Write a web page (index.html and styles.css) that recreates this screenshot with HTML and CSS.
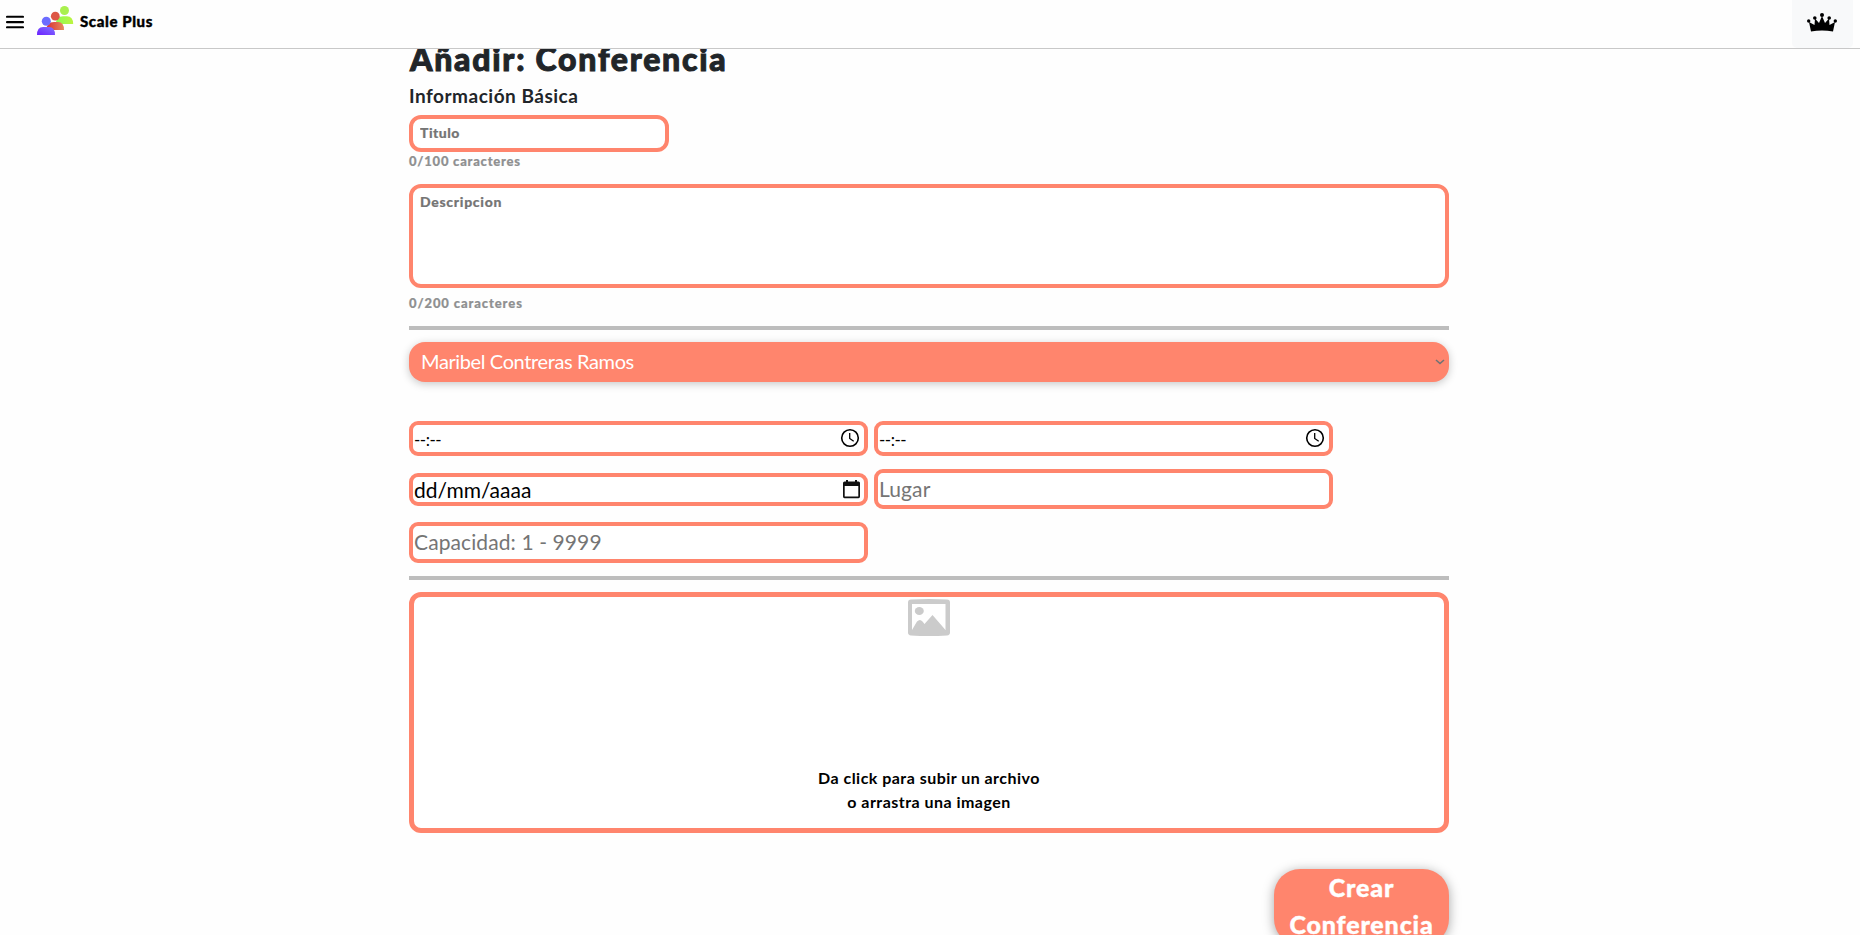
FILE: index.html
```html
<!DOCTYPE html>
<html lang="es">
<head>
<meta charset="utf-8">
<title>Scale Plus</title>
<link rel="stylesheet" href="styles.css">
</head>
<body>
<header class="topbar">
  <svg class="menu" width="18" height="14" viewBox="0 0 18 14"><path d="M1 1.8h16M1 7.1h16M1 12.3h16" stroke="#000" stroke-width="2.1" stroke-linecap="round"/></svg>
  <svg class="logo" width="37" height="30" viewBox="0 0 37 30">
    <defs>
      <linearGradient id="g1" x1="0" x2="1"><stop offset="0" stop-color="#8dfb55"/><stop offset="1" stop-color="#bdf43f"/></linearGradient>
      <linearGradient id="g2" x1="0" x2="1"><stop offset="0" stop-color="#d92f36"/><stop offset="1" stop-color="#e68a5c"/></linearGradient>
      <linearGradient id="g3" x1="0" x2="1" y1="1" y2="0"><stop offset="0" stop-color="#6a20ff"/><stop offset="1" stop-color="#8274ff"/></linearGradient>
    </defs>
    <circle cx="27.5" cy="4.5" r="4.5" fill="#a9f04e"/><path d="M19 18q0-7.800 7-7.800h4q6 0 6.200 7.800z" fill="url(#g1)"/>
    <circle cx="18.300" cy="10.200" r="4.400" fill="#dd5746"/><path d="M9.500 24q0-8 7.500-8h4q6 0 6 8z" fill="url(#g2)"/>
    <circle cx="9.300" cy="15.200" r="4.500" fill="#6c6cff"/><path d="M0 29q0-8 6-8h6q6 0 6 8z" fill="url(#g3)"/>
  </svg>
  <span class="brand">Scale Plus</span>
  <div class="crown">
    <svg width="30" height="19" viewBox="0 0 30 19"><path d="M4 18.500 2 9 7.500 12 8 5.500l4 4.500L15 3l3 7 4-4.500.5 6.500L28 9l-2 9.500q-11-2-22 0z"/><circle cx="1.700" cy="8" r="1.700"/><circle cx="7.800" cy="5" r="1.800"/><circle cx="15" cy="2" r="2"/><circle cx="22.200" cy="5" r="1.800"/><circle cx="28.300" cy="8" r="1.700"/></svg>
  </div>
</header>
<main class="form">
  <h1 class="title">Añadir: Conferencia</h1>
  <h2 class="subtitle">Información Básica</h2>
  <input class="field name" placeholder="Titulo">
  <div class="count count-name">0/100 caracteres</div>
  <textarea class="field description" placeholder="Descripcion"></textarea>
  <div class="count count-desc">0/200 caracteres</div>
  <hr class="rule">
  <div class="select"><span class="person">Maribel Contreras Ramos</span>
    <svg width="10" height="6" viewBox="0 0 10 6"><path d="M1 1l4 3.500L9 1" fill="none" stroke="#6f7274" stroke-width="1.600"/></svg>
  </div>
  <div class="grid">
    <div class="box time"><span class="dashes">--:--</span><svg width="20" height="20" viewBox="0 0 20 20"><circle cx="10" cy="10" r="8.300" fill="none" stroke="#000" stroke-width="1.600"/><path d="M9.700 5v5.500l4 2.800" fill="none" stroke="#000" stroke-width="1.300"/></svg></div>
    <div class="box time"><span class="dashes">--:--</span><svg width="20" height="20" viewBox="0 0 20 20"><circle cx="10" cy="10" r="8.300" fill="none" stroke="#000" stroke-width="1.600"/><path d="M9.700 5v5.500l4 2.800" fill="none" stroke="#000" stroke-width="1.300"/></svg></div>
    <div class="box date"><span class="datetext">dd/mm/aaaa</span><svg width="17" height="19" viewBox="0 0 17 19"><path d="M3 0h2v1.500h7V0h2v1.500h1.500Q17 1.500 17 3v13.500q0 1.700-1.500 1.700h-14Q0 18.200 0 16.500V3q0-1.500 1.500-1.500H3zM1.700 6v10.500h13.600V6z" fill-rule="evenodd" fill="#111"/></svg></div>
    <input class="field place" placeholder="Lugar">
    <input class="field capacity" placeholder="Capacidad: 1 - 9999">
  </div>
  <hr class="rule rule-low">
  <div class="drop">
    <svg class="picture" width="42" height="37" viewBox="0 0 42 37"><path fill="#cbcbcb" fill-rule="evenodd" d="M3 .5Q21-.3 39 .5q3 0 3 3v30q0 2.700-3 2.900-18 1-36 0-3-.2-3-2.900v-30q0-3 3-3zM4 5v26l5-8.500q3-3 5.500 0l2 2.500L24.500 16 37.500 31V5z"/><ellipse cx="11.300" cy="12" rx="4.500" ry="4" fill="#cbcbcb"/></svg>
    <p class="hint"><span class="hint-top">Da click para subir un archivo</span><br><span class="hint-low">o arrastra una imagen</span></p>
  </div>
  <button class="create"><span class="create-top">Crear</span><br><span class="create-low">Conferencia</span></button>
</main>
</body>
</html>
```
FILE: styles.css
```css
* { box-sizing: border-box; }
html { overflow: hidden; }
body { margin: 0; height: 935px; overflow: hidden; background: #fefefe; font-family: Lato, "Open Sans", sans-serif; color: #212529; }
.topbar { position: fixed; z-index: 2; top: 0; left: 0; right: 0; height: 49px; background: #fefefe; border-bottom: 1px solid #c8c8c8; display: flex; padding-left: 6px; }
.menu { margin-top: 15px; }
.logo { margin: 6px 0 0 13px; }
.brand { margin: 11px 0 0 6px; font: 900 15px/20px Lato, sans-serif; color: #000; white-space: nowrap; letter-spacing: .6px; -webkit-text-stroke: .4px; }
.crown { margin: 0 7px 0 auto; width: 61px; height: 48px; background: #f8f9fa; border-radius: 0 0 5px 5px; padding: 13px 0 0 15px; }
.form { width: 1040px; margin: 0 0 0 409px; padding-top: 38px; display: flex; flex-direction: column; }
.title { margin: 0; height: 42px; padding-left: 1px; font-size: 32px; line-height: 42px; font-weight: 900; letter-spacing: 1.75px; -webkit-text-stroke: 1px; white-space: nowrap; }
.subtitle { margin: 3px 0 0; height: 26px; font-size: 19px; line-height: 26px; font-weight: 700; letter-spacing: .5px; white-space: nowrap; }
.field { display: block; font-family: inherit; background: #fff; border: 4px solid #ff856d; border-radius: 12px; margin: 0; outline: 0; resize: none; }
.field::placeholder { color: #757575; opacity: 1; }
.name { width: 260px; height: 37px; margin-top: 6px; padding: 0 7px 2px; font-size: 14px; font-weight: 900; letter-spacing: .5px; -webkit-text-stroke: .2px; }
.count { height: 18px; font-size: 13px; line-height: 18px; font-weight: 900; color: #8f9091; letter-spacing: .78px; -webkit-text-stroke: .2px; white-space: nowrap; }
.description { width: 100%; height: 104px; margin-top: 14px; padding: 4px 7px; font-size: 14px; line-height: 20px; font-weight: 900; letter-spacing: .7px; -webkit-text-stroke: .2px; }
.count-desc { margin-top: 6px; letter-spacing: .9px; }
.rule { width: 100%; height: 4px; margin: 14px 0 12px; border: 0; background: #bdbdbd; }
.select { height: 40px; border-radius: 16px; background: #ff856d; color: #fff; box-shadow: 0 2px 8px rgba(0,0,0,.22); display: flex; align-items: center; justify-content: space-between; padding: 0 4px 0 12px; font-size: 20px; letter-spacing: -.38px; }
.person { padding-bottom: 2px; }
.grid { margin-top: 39px; display: grid; grid-template-columns: 459px 459px; column-gap: 6px; grid-template-rows: 35px 40px 41px; row-gap: 13px; align-items: center; }
.box { border: 4px solid #ff856d; border-radius: 9px; background: #fff; display: flex; justify-content: space-between; color: #000; white-space: nowrap; }
.time { height: 35px; padding: 3px 4px 0 1px; font-size: 21px; line-height: 24px; }
.dashes { font-size: 17px; letter-spacing: -.5px; }
.date { height: 33px; padding: 3px 4px 0 1px; font-size: 21px; line-height: 20px; }
.place, .capacity { width: 459px; border-radius: 9px; font-size: 21px; padding: 0 1px 2px; letter-spacing: .1px; }
.place { height: 40px; }
.capacity { height: 41px; }
.rule-low { margin-top: 13px; }
.drop { height: 241px; border: 5px solid #ff856d; border-radius: 12px; background: #fff; padding-top: 2px; display: flex; flex-direction: column; align-items: center; }
.hint { margin: 130px 0 0; text-align: center; font-size: 16px; line-height: 24px; font-weight: 700; letter-spacing: .47px; color: #000; white-space: nowrap; }
.create { align-self: flex-end; width: 175px; height: 76px; margin-top: 36px; padding: 0 0 3px; border: 0; border-radius: 26px; background: #ff856d; box-shadow: 0 2px 12px rgba(0,0,0,.35); color: #fff; font: 900 25px/37px Lato, sans-serif; letter-spacing: .85px; -webkit-text-stroke: .4px; white-space: nowrap; }
```
